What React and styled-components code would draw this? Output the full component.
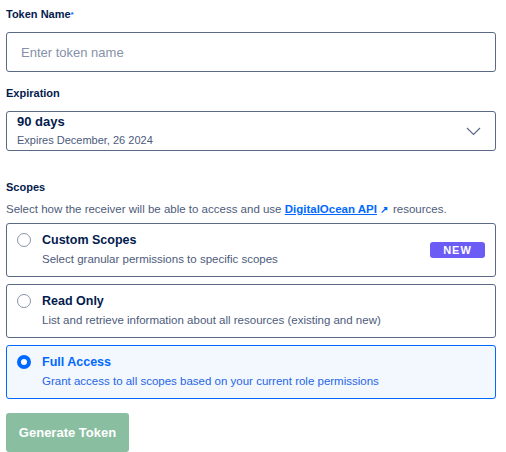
import React from 'react';
import styled, { createGlobalStyle, css } from 'styled-components';

const GlobalStyle = createGlobalStyle`
  * { box-sizing: border-box; }
  body {
    margin: 0;
    background: #ffffff;
    font-family: "Liberation Sans", Arial, sans-serif;
    color: #031b4e;
  }
`;

const Page = styled.div`
  width: 506px;
  padding: 8px 10px 0 6px;
`;

const Field = styled.div`
  margin-bottom: ${(p) => p.$gap || 15}px;
`;

const Label = styled.div`
  font-size: 11px;
  line-height: 13px;
  font-weight: 700;
  color: #031b4e;
  margin-bottom: ${(p) => p.$gap || 11}px;
`;

const Required = styled.span`
  color: #0069ff;
  font-size: 8px;
  vertical-align: top;
`;

const boxStyle = css`
  width: 100%;
  height: 40px;
  border: 1px solid #5b6987;
  border-radius: 3px;
  background: #fff;
`;

const Input = styled.input`
  ${boxStyle}
  display: block;
  padding: 0 14px;
  font-family: inherit;
  font-size: 13px;
  color: #031b4e;
  outline: none;
  &::placeholder { color: #8690a8; }
`;

const Select = styled.div`
  ${boxStyle}
  display: flex;
  align-items: center;
  justify-content: space-between;
  padding: 0 14px 0 10px;
`;

const SelectText = styled.div`
  display: flex;
  flex-direction: column;
  margin-top: -1px;
`;

const SelectValue = styled.span`
  font-size: 13px;
  line-height: 16px;
  font-weight: 700;
  color: #031b4e;
`;

const SelectHint = styled.span`
  font-size: 11px;
  line-height: 16px;
  color: #4d5b7c;
  margin-top: 2px;
`;

const Description = styled.p`
  margin: -2px 0 7px;
  font-size: 11.5px;
  line-height: 13px;
  color: #4d5b7c;
`;

const Link = styled.a`
  color: #0069ff;
  font-weight: 700;
  text-decoration: underline;
`;

const LinkArrow = styled.span`
  color: #0069ff;
  font-weight: 700;
  font-size: 10px;
  margin: 0 5px 0 3px;
`;

const Options = styled.div`
  display: flex;
  flex-direction: column;
  gap: 7px;
`;

const Card = styled.label`
  display: flex;
  align-items: flex-start;
  height: 54px;
  padding: 8px 10px 0 10px;
  border: 1px solid ${(p) => (p.$selected ? '#0069ff' : '#5b6987')};
  border-radius: 3px;
  background: ${(p) => (p.$selected ? '#f3f7fe' : '#fff')};
`;

const Radio = styled.span`
  flex: none;
  width: 14px;
  height: 14px;
  margin-top: 1px;
  border-radius: 50%;
  border: ${(p) => (p.$checked ? '4px solid #0069ff' : '1px solid #8a94aa')};
  background: #fff;
`;

const CardBody = styled.div`
  flex: 1;
  margin-left: 11px;
  display: flex;
  flex-direction: column;
  gap: 4px;
`;

const CardTitle = styled.span`
  font-size: 12.5px;
  line-height: 16px;
  font-weight: 700;
  color: ${(p) => (p.$selected ? '#0069ff' : '#031b4e')};
`;

const CardText = styled.span`
  font-size: 11.5px;
  line-height: 14px;
  color: ${(p) => (p.$selected ? '#1f66e6' : '#4d5b7c')};
`;

const Badge = styled.span`
  align-self: center;
  margin-top: -8px;
  width: 55px;
  height: 16px;
  border-radius: 3px;
  background: #6b5cf6;
  color: #fff;
  font-size: 11px;
  font-weight: 700;
  letter-spacing: 1px;
  display: flex;
  align-items: center;
  justify-content: center;
`;

const Button = styled.button`
  margin-top: 14px;
  width: 123px;
  height: 39px;
  border: none;
  border-radius: 3px;
  background: #89bea1;
  color: #fff;
  font-family: inherit;
  font-size: 13px;
  font-weight: 700;
`;

const Chevron = () => (
  <svg width="15" height="9" viewBox="0 0 15 9" fill="none">
    <path d="M1 1l6.5 6.5L14 1" stroke="#5b6987" strokeWidth="1.2" />
  </svg>
);

const scopes = [
  { title: 'Custom Scopes', text: 'Select granular permissions to specific scopes', badge: 'NEW' },
  { title: 'Read Only', text: 'List and retrieve information about all resources (existing and new)' },
  { title: 'Full Access', text: 'Grant access to all scopes based on your current role permissions', selected: true },
];

const App = () => (
  <>
    <GlobalStyle />
    <Page>
      <Field>
        <Label>
          Token Name<Required>*</Required>
        </Label>
        <Input placeholder="Enter token name" />
      </Field>
      <Field $gap={30}>
        <Label>Expiration</Label>
        <Select>
          <SelectText>
            <SelectValue>90 days</SelectValue>
            <SelectHint>Expires December, 26 2024</SelectHint>
          </SelectText>
          <Chevron />
        </Select>
      </Field>
      <Label $gap={0}>Scopes</Label>
      <Description>
        Select how the receiver will be able to access and use{' '}
        <Link>DigitalOcean API</Link>
        <LinkArrow>↗</LinkArrow>resources.
      </Description>
      <Options>
        {scopes.map((s) => (
          <Card key={s.title} $selected={s.selected}>
            <Radio $checked={s.selected} />
            <CardBody>
              <CardTitle $selected={s.selected}>{s.title}</CardTitle>
              <CardText $selected={s.selected}>{s.text}</CardText>
            </CardBody>
            {s.badge && <Badge>{s.badge}</Badge>}
          </Card>
        ))}
      </Options>
      <Button>Generate Token</Button>
    </Page>
  </>
);

export default App;
